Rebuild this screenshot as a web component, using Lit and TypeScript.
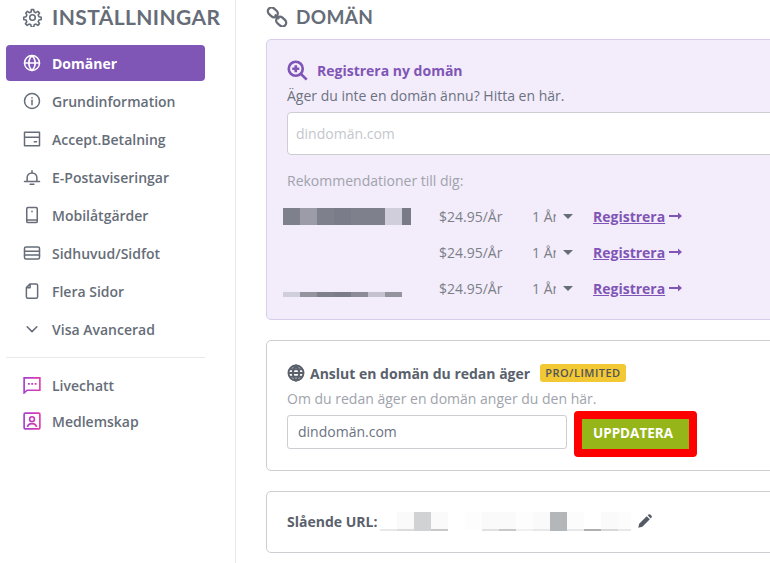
import { LitElement, html, css, svg } from "lit";
import { customElement } from "lit/decorators.js";

const s = (body: unknown, size = 18, vb = "0 0 24 24") =>
  html`<svg width=${size} height=${size} viewBox=${vb} fill="none" stroke="currentColor" stroke-width="2" stroke-linecap="round" stroke-linejoin="round">${body}</svg>`;

const icons: Record<string, unknown> = {
  globe: svg`<circle cx="12" cy="12" r="10"/><path d="M2 12h20M12 2c3 3 4.300 6.500 4.300 10S15 19 12 22c-3-3-4.300-6.500-4.300-10S9 5 12 2z"/>`,
  info: svg`<circle cx="12" cy="12" r="10"/><path d="M12 11v6"/><path d="M12 7.500v.5"/>`,
  card: svg`<path d="M2 3h20v18H2zM2 9.500h20M15 15.500h3"/>`,
  bell: svg`<path d="M2 18h20M5.500 18v-5a6.500 6.500 0 0 1 13 0v5M12 3.500v3M9.500 21.500h5"/>`,
  mobile: svg`<path d="M5 3.500a1.500 1.500 0 0 1 1.500-1.500h11A1.500 1.500 0 0 1 19 3.500v17a1.500 1.500 0 0 1-1.500 1.500h-11A1.500 1.500 0 0 1 5 20.500zM5 18.500h14M12 7v.5"/>`,
  header: svg`<rect x="2" y="4" width="20" height="16" rx="2"/><path d="M2 9.500h20M2 14.500h20"/>`,
  pages: svg`<path d="M9.500 2.500h8a2 2 0 0 1 2 2v15a2 2 0 0 1-2 2h-11a2 2 0 0 1-2-2V7.500zM9.500 2.500v5h-5"/>`,
  chevron: svg`<path d="M5.500 9l6.500 6.500L18.500 9"/>`,
};

const Nav = [
  ["globe", "Domäner"],
  ["info", "Grundinformation"],
  ["card", "Accept.Betalning"],
  ["bell", "E-Postaviseringar"],
  ["mobile", "Mobilåtgärder"],
  ["header", "Sidhuvud/Sidfot"],
  ["pages", "Flera Sidor"],
  ["chevron", "Visa Avancerad"],
];

const row1 = ["#7e808c", "#9c9ca8", "#7e808c", "#7b7c89", "#7e808c", "#7e808c", "#d0ceda", "#797b87"];
const row3 = ["#d0ceda", "#94949f", "#7e808c", "#7b7c89", "#8c8c98", "#c4c2cf", "#94949f"];
const urlTop = ["#ffffff", "#fafafa", "#d0d2d4", "#fafafa", "#ffffff", "#fdfdfd", "#fafafa", "#fafafa", "#fdfdfd", "#fafafa", "#b4b7ba", "#fcfcfc", "#ffffff", "#fafafa", "#fcfcfc"];
const urlBot = ["#e8e8e8", "#dcdcdc", "#d0d2d4", "#c8c8c8", "#ffffff", "#ffffff", "#e0e0e0", "#c8c8c8", "#f0f0f0", "#e8e8e8", "#b4b7ba", "#e8e8e8", "#b0b0b0", "#d8d8d8", "#e8e8e8"];

@customElement("app-root")
export class AppRoot extends LitElement {
  static styles = css`
    :host { display: block; width: 770px; height: 563px; overflow: hidden; background: #fff; font-family: "Open Sans", sans-serif; color: #6b7280; }
    .page { display: flex; height: 563px; }
    .side { width: 236px; flex: none; box-sizing: border-box; border-right: 1px solid #e8e9eb; padding: 7px 30px 0 6px; }
    .side-title { display: flex; align-items: center; gap: 10px; height: 20px; padding-left: 17px; margin-bottom: 18px; font: 700 21px/20px Lato, sans-serif; letter-spacing: 0.4px; color: #666d78; }
    .side-title svg { flex: none; }
    .nav { display: flex; align-items: center; height: 36px; margin-bottom: 2px; padding-left: 17px; gap: 11px; border-radius: 4px; font-size: 14px; font-weight: 600; color: #666d78; }
    .nav.on { background: #7f56b5; color: #fff; font-weight: 700; }
    .nav svg { flex: none; }
    hr { border: 0; border-top: 1px solid #e8e9eb; margin: 10px 0 9px; }
    .nav.promo { height: 36px; margin-bottom: 0; }
    .main { flex: 1; min-width: 0; padding: 7px 0 0 30px; }
    .main-title { display: flex; align-items: center; gap: 8px; height: 20px; margin-bottom: 12px; font: 700 19px/20px Lato, sans-serif; letter-spacing: 0.3px; color: #666d78; }
    .card { width: 560px; box-sizing: border-box; border: 1px solid #ccced2; border-radius: 5px; padding: 0 20px; }
    .reg { height: 281px; background: #f3ecfb; border-color: #d8cdea; padding-top: 19px; }
    .reg-h { display: flex; align-items: center; gap: 9px; height: 22px; font-size: 14px; font-weight: 700; color: #7f56b5; }
    .sub { font-size: 14px; line-height: 20px; margin-top: 5px; color: #6b7280; }
    .search { height: 43px; box-sizing: border-box; margin-top: 6px; background: #fff; border: 1px solid #ccced2; border-radius: 4px; padding-left: 8px; display: flex; align-items: center; font-size: 14px; color: #c4c7cc; }
    .rec-l { margin-top: 16px; font-size: 14px; line-height: 20px; color: #a0a3ab; }
    .rec { display: grid; grid-template-columns: 152px 93px 61px auto; align-items: center; height: 36px; font-size: 14px; color: #7b7f88; }
    .recs { margin-top: 7px; }
    .blur { display: flex; }
    .rec .blur { margin-left: -4px; }
    .blur i { display: block; width: 17px; height: 17px; }
    .blur i.short { width: 9px; }
    .blur.thin { align-self: end; margin-bottom: 9px; }
    .blur.thin i { height: 5px; }
    .yr { display: flex; align-items: center; gap: 7px; }
    .yr span { display: block; width: 24px; overflow: hidden; white-space: nowrap; }
    .caret { width: 0; height: 0; border: 5px solid transparent; border-top-color: #666d78; border-bottom: 0; }
    .reg-link { display: flex; align-items: center; gap: 4px; color: #7f56b5; font-weight: 700; text-decoration: underline; }
    .own { height: 131px; margin-top: 20px; padding-top: 20px; }
    .own-h { display: flex; align-items: center; height: 24px; font-size: 14px; font-weight: 700; color: #5a616c; }
    .own-h svg { margin-right: 5px; }
    .badge { margin-left: 10px; height: 18px; padding: 0 5px; border-radius: 3px; background: #f2c835; color: #4f535a; font-size: 11px; font-weight: 600; letter-spacing: 0.5px; line-height: 18px; }
    .own .sub { margin-top: 4px; color: #a0a3ab; line-height: 20px; }
    .own-row { display: flex; align-items: flex-start; margin-top: 2px; gap: 7px; }
    .own-in { width: 280px; height: 34px; margin-top: 4px; padding: 0 0 2px 10px; box-sizing: border-box; border: 1px solid #ccced2; border-radius: 3px; display: flex; align-items: center; font-size: 14px; color: #6b7280; }
    .btn-wrap { border: 8px solid #f00; border-radius: 4px; }
    .btn { width: 107px; height: 30px; box-sizing: border-box; padding: 0 5px 3px 0; background: #95b518; color: #fff; font-size: 13.5px; font-weight: 700; display: flex; align-items: center; justify-content: center; }
    .url { height: 62px; margin-top: 20px; padding-bottom: 1px; display: flex; align-items: center; font-size: 14px; font-weight: 700; color: #5a616c; }
    .ublur { margin-left: 3px; display: flex; flex-direction: column; }
    .ublur .blur i:last-child { width: 13px; }
    .ublur .blur.b i { height: 2px; }
    .pen { margin-left: 6px; color: #555b65; }
  `;

  blur(colors: string[], cls = "") {
    return html`<div class="blur ${cls}">${colors.map((c, i) => html`<i class=${i === 7 && colors.length === 8 ? "short" : ""} style="background:${c}"></i>`)}</div>`;
  }

  rec(left: unknown) {
    return html`<div class="rec">${left}<div>$24.95/År</div>
      <div class="yr"><span>1 År</span><b class="caret"></b></div>
      <div class="reg-link">Registrera
        <svg width="13" height="8" viewBox="0 0 13 8"><path d="M0 3h9V0.500L13 4 9 7.500V5H0z" fill="#7f56b5"/></svg>
      </div></div>`;
  }

  render() {
    return html`<div class="page">
      <aside class="side">
        <div class="side-title">
          ${s(svg`<circle cx="12" cy="12" r="3.500"/><path d="M10.500 2h3l.6 3 2.200.9 2.500-1.700 2.100 2.100-1.700 2.500.9 2.200 3 .6v3l-3 .6-.9 2.200 1.700 2.500-2.100 2.100-2.500-1.700-2.200.9-.6 3h-3l-.6-3-2.200-.9-2.500 1.700-2.100-2.100 1.700-2.500-.9-2.200-3-.6v-3l3-.6.9-2.200L3.500 6.300l2.100-2.100 2.500 1.700 2.200-.9z"/>`, 19)}
          INSTÄLLNINGAR
        </div>
        ${Nav.map(([ic, t], i) => html`<div class="nav ${i === 0 ? "on" : ""}">${s(icons[ic])}<span>${t}</span></div>`)}
        <hr />
        <div class="nav promo">
          <svg width="18" height="18" viewBox="0 0 24 24" fill="none" stroke-width="2.200"><defs><linearGradient id="g1" x1="0" y1="0" x2="24" y2="0" gradientUnits="userSpaceOnUse"><stop offset="0" stop-color="#a040d0"/><stop offset="1" stop-color="#e63ba8"/></linearGradient></defs><path stroke="url(#g1)" d="M1.500 2.500h21v16.500H5.500l-4 3.500z"/><path stroke="url(#g1)" d="M6.500 10.500h2.500M11 10.500h2.500M15.500 10.500H18" stroke-width="2.600"/></svg>
          <span>Livechatt</span>
        </div>
        <div class="nav promo">
          <svg width="18" height="18" viewBox="0 0 24 24" fill="none" stroke-width="2.200"><defs><linearGradient id="g2" x1="0" y1="0" x2="24" y2="0" gradientUnits="userSpaceOnUse"><stop offset="0" stop-color="#a040d0"/><stop offset="1" stop-color="#e63ba8"/></linearGradient></defs><rect stroke="url(#g2)" x="1.500" y="1.500" width="21" height="21" rx="1.500"/><circle stroke="url(#g2)" cx="12" cy="9.500" r="3.200"/><path stroke="url(#g2)" d="M6 20c.5-3 3-4.500 6-4.500s5.500 1.500 6 4.500"/></svg>
          <span>Medlemskap</span>
        </div>
      </aside>
      <main class="main">
        <div class="main-title">
          <svg width="22" height="20" viewBox="0 0 24 24" fill="none" stroke="#666d78" stroke-width="2.800"><rect x="0.500" y="2" width="13" height="9" rx="4.500" transform="rotate(42 7 6.500)"/><rect x="10.500" y="13" width="13" height="9" rx="4.500" transform="rotate(42 17 17.500)"/><path d="M9.500 9l5 5.500"/></svg>
          DOMÄN
        </div>
        <section class="card reg">
          <div class="reg-h">
            <svg width="21" height="21" viewBox="0 0 24 24" fill="none" stroke="#7f56b5" stroke-width="3"><circle cx="10" cy="10" r="8"/><path d="M16 16l6.500 6.500M10 6v8M6 10h8"/></svg>
            Registrera ny domän
          </div>
          <div class="sub">Äger du inte en domän ännu? Hitta en här.</div>
          <div class="search">dindomän.com</div>
          <div class="rec-l">Rekommendationer till dig:</div>
          <div class="recs">
            ${this.rec(this.blur(row1))}
            ${this.rec(html`<div></div>`)}
            ${this.rec(this.blur(row3, "thin"))}
          </div>
        </section>
        <section class="card own">
          <div class="own-h">
            <svg width="18" height="18" viewBox="0 0 24 24" fill="none" stroke="#5a616c" stroke-width="2.600"><circle cx="12" cy="12" r="10"/><path d="M2 12h20M3.500 7h17M3.500 17h17M12 2c3 3 4.300 6.500 4.300 10S15 19 12 22c-3-3-4.300-6.500-4.300-10S9 5 12 2z"/></svg>
            Anslut en domän du redan äger
            <span class="badge">PRO/LIMITED</span>
          </div>
          <div class="sub">Om du redan äger en domän anger du den här.</div>
          <div class="own-row">
            <div class="own-in">dindomän.com</div>
            <div class="btn-wrap"><div class="btn">UPPDATERA</div></div>
          </div>
        </section>
        <section class="card url">
          Slående URL:
          <div class="ublur">${this.blur(urlTop)}${this.blur(urlBot, "b")}</div>
          <svg class="pen" width="15" height="15" viewBox="0 0 24 24" fill="currentColor"><path d="M2 22l1.500-6.500L15.500 3.500l5 5L8.500 20.500zM17 2l1.500-1.200a2 2 0 0 1 2.700.1l2 2a2 2 0 0 1 0 2.700L22 7z"/></svg>
        </section>
      </main>
    </div>`;
  }
}
